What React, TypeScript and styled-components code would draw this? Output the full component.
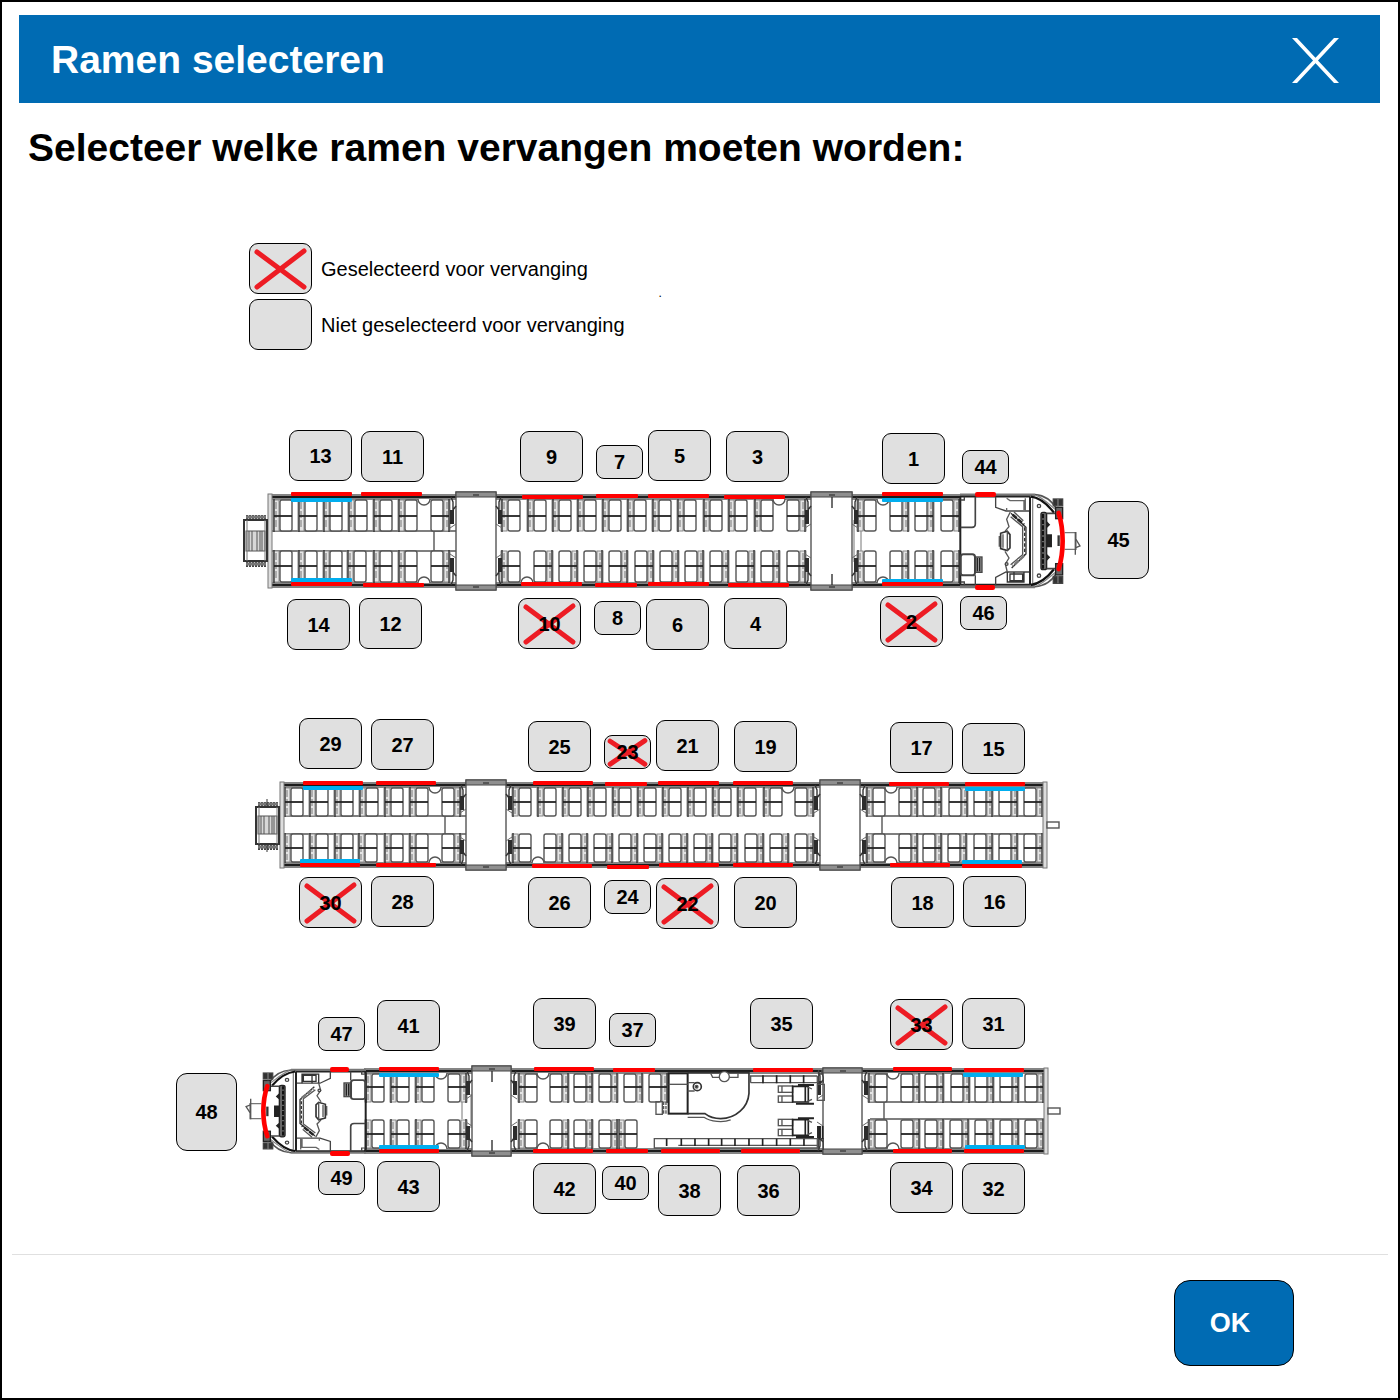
import React, { useState } from "react";
import styled, { createGlobalStyle } from "styled-components";

const GlobalStyle = createGlobalStyle`
  *, *::before, *::after { box-sizing: border-box; }
  body {
    margin: 0;
    background: #fff;
    color: #000;
    font-family: "Liberation Sans", Arial, sans-serif;
  }
`;

const BLUE = "#006bb3";

const Dialog = styled.main`
  display: flex;
  flex-direction: column;
  min-height: 100vh;
  border: 2px solid #000;
  background: #fff;
`;

const TitleBar = styled.header`
  display: flex;
  align-items: center;
  justify-content: space-between;
  height: 88px;
  margin: 13px 18px 0 17px;
  padding: 2px 40px 0 32px;
  background: ${BLUE};
  color: #fff;
`;

const Title = styled.h1`
  margin: 0;
  font-size: 39px;
  line-height: 46px;
  font-weight: bold;
`;

const CloseButton = styled.button`
  display: flex;
  padding: 0;
  border: 0;
  background: none;
  color: #fff;
  cursor: pointer;
`;

const Prompt = styled.h2`
  margin: 22px 26px 0;
  font-size: 39px;
  line-height: 46px;
  font-weight: bold;
`;

const Board = styled.div`
  display: flex;
  flex-direction: column;
  width: 1060px;
  margin: 72px auto 0;
`;

const Legend = styled.div`
  display: flex;
  align-items: center;
  gap: 34px;
  padding-left: 79px;
  margin-bottom: 70px;
`;

const LegendList = styled.ul`
  display: grid;
  gap: 5px;
  margin: 0;
  padding: 0;
  list-style: none;
`;

const LegendItem = styled.li`
  display: flex;
  align-items: center;
  gap: 9px;
  font-size: 20px;
  line-height: 24px;
`;

const Stray = styled.span`
  padding-bottom: 8px;
  font-size: 12px;
  line-height: 12px;
`;

const Swatch = styled.span`
  display: block;
  width: 63px;
  height: 51px;
  border: 1px solid #000;
  border-radius: 9px;
  background: #e0e0e0;
`;

const Coaches = styled.div`
  display: grid;
  gap: 48px;
`;

const CoachCanvas = styled.section`
  position: relative;
  height: 240px;
`;

const Drawing = styled.svg`
  display: block;
  width: 1060px;
  height: 240px;
`;

type PinSize = "normal" | "small" | "front";

const pinSizes: Record<PinSize, { width: number; height: number; radius: number }> = {
  normal: { width: 63, height: 51, radius: 9 },
  small: { width: 47, height: 34, radius: 8 },
  front: { width: 61, height: 78, radius: 11 },
};

const Pin = styled.button<{ $size: PinSize; $x: number; $y: number }>`
  position: absolute;
  left: ${(p) => p.$x}px;
  top: ${(p) => p.$y}px;
  display: grid;
  place-items: center;
  width: ${(p) => pinSizes[p.$size].width}px;
  height: ${(p) => pinSizes[p.$size].height}px;
  padding: 0;
  border: 1px solid #000;
  border-radius: ${(p) => pinSizes[p.$size].radius}px;
  background: #e0e0e0;
  color: #000;
  font: bold 20px/24px "Liberation Sans", Arial, sans-serif;
  cursor: pointer;

  & > * { grid-area: 1 / 1; }
`;

const PinNumber = styled.span`
  position: relative;
`;

const CrossSvg = styled.svg`
  display: block;
  width: 100%;
  height: 100%;
`;

const Divider = styled.hr`
  width: calc(100% - 20px);
  height: 1px;
  margin: 18px 10px 0;
  border: 0;
  background: #e0e0e0;
`;

const Footer = styled.footer`
  display: flex;
  justify-content: flex-end;
  padding: 25px 104px 32px;
`;

const OkButton = styled.button`
  width: 120px;
  height: 86px;
  padding: 0 8px 0 0;
  border: 1px solid #000;
  border-radius: 16px;
  background: ${BLUE};
  color: #fff;
  font: bold 27px/32px "Liberation Sans", Arial, sans-serif;
  cursor: pointer;
`;

function Cross() {
  return (
    <CrossSvg viewBox="0 0 61 49" preserveAspectRatio="none" aria-hidden="true">
      <path
        d="M7 8L54 43M54 7L7 43"
        fill="none"
        stroke="#ed1c24"
        strokeWidth="5"
        strokeLinecap="round"
        vectorEffect="non-scaling-stroke"
      />
    </CrossSvg>
  );
}

/* ---------- train plan ---------- */

/* The three coaches share one plan; each one shows the part that starts at its own top. */
const PLAN_LEFT = 170;

type Window = [number: number, x: number, y: number, size?: PinSize];
type Bar = [from: number, to: number, y: number];

interface Levels {
  wallTop: number;
  seatTop: number;
  midTop: number;
  aisleTop: number;
  aisleBottom: number;
  midBottom: number;
  seatBottom: number;
  wallBottom: number;
}

interface SeatRows {
  left: number[];
  right: number[];
}

function Seat({ x, top, bottom, mid, flip }: { x: number; top: number; bottom: number; mid: number; flip?: boolean }) {
  const h = bottom - top;
  const back = flip ? x + 13 : x;
  const cushion = flip ? x : x + 7;
  return (
    <g strokeWidth="1.4">
      <rect x={back} y={top} width="6" height={h} fill="#e4e4e4" stroke="#8a8a8a" strokeWidth="1" />
      <path d={`M${flip ? back + 5 : back + 1} ${top - 1}V${bottom + 1}`} stroke="#333" />
      <path d={`M${back + 3} ${top + 2}V${bottom - 2}`} stroke="#777" strokeDasharray="7 2" strokeWidth="1" />
      <rect x={cushion} y={top} width="12" height={h} rx="2" fill="#fff" stroke="#555" />
      <path d={`M${flip ? x : x + 1} ${mid}h18`} stroke="#222" strokeWidth="1.8" />
    </g>
  );
}

function Seats({ rows, top, bottom, mid }: { rows: SeatRows; top: number; bottom: number; mid: number }) {
  return (
    <g>
      {rows.left.map((x) => (
        <Seat key={`l${x}`} x={x} top={top} bottom={bottom} mid={mid} />
      ))}
      {rows.right.map((x) => (
        <Seat key={`r${x}`} x={x} top={top} bottom={bottom} mid={mid} flip />
      ))}
    </g>
  );
}

function Walls({ from, to, lv }: { from: number; to: number; lv: Levels }) {
  const w = to - from;
  return (
    <g>
      <rect x={from} y={lv.wallTop} width={w} height="6" fill="#858585" />
      <path d={`M${from} ${lv.wallTop + 3}H${to}`} stroke="#1c1c1c" strokeWidth="2" />
      <rect x={from} y={lv.wallBottom - 6} width={w} height="6" fill="#858585" />
      <path d={`M${from} ${lv.wallBottom - 3}H${to}`} stroke="#1c1c1c" strokeWidth="2" />
    </g>
  );
}

/* Door section between two seat areas. */
function Vestibule({ from, to, lv, ticks, flush }: { from: number; to: number; lv: Levels; ticks?: boolean; flush?: boolean }) {
  const out = flush ? 0 : 2;
  const t = lv.wallTop - out;
  const b = lv.wallBottom + out;
  const mid = Math.round((from + to) / 2);
  const posts = [
    { x: from - 6, edge: from, dir: 1 },
    { x: to + 2, edge: to, dir: -1 },
  ];
  return (
    <g>
      <rect x={from} y={t} width={to - from} height={b - t} fill="#fff" stroke="#555" strokeWidth="1.4" />
      <rect x={from} y={t} width={to - from} height="5" fill="#8f8f8f" stroke="#444" />
      <rect x={from} y={b - 5} width={to - from} height="5" fill="#8f8f8f" stroke="#444" />
      <path d={`M${mid - 3} ${t + 3}h6M${mid - 3} ${b - 3}h6`} stroke="#444" strokeWidth="1.4" />
      {ticks && <path d={`M${mid} ${t + 5}v11M${mid} ${b - 5}v-11`} stroke="#333" strokeWidth="1.4" />}
      {posts.map((p) => (
        <g key={p.x} fill="none">
          <path
            d={`M${p.edge} ${lv.seatTop + 6}l${-3 * p.dir} 4v-8l${-2 * p.dir} -5M${p.edge} ${lv.seatBottom - 6}l${-3 * p.dir} -4v8l${-2 * p.dir} 5`}
            stroke="#333"
            strokeWidth="1.4"
          />
          <path d={`M${p.edge} ${lv.aisleTop - 7}l${-6 * p.dir} 4M${p.edge} ${lv.aisleBottom + 7}l${-6 * p.dir} -4`} stroke="#666" />
          <rect x={p.x} y={lv.midTop - 6} width="4" height="14" fill="#2c2c2c" />
          <rect x={p.x} y={lv.midBottom - 8} width="4" height="14" fill="#2c2c2c" />
        </g>
      ))}
    </g>
  );
}

function Tables({ top, bottom, lv }: { top: number[]; bottom: number[]; lv: Levels }) {
  return (
    <g fill="#fff" stroke="#555" strokeWidth="1.4">
      {top.map((x) => (
        <path key={`t${x}`} d={`M${x - 6} ${lv.seatTop - 1}a6 6 0 0 0 12 0`} />
      ))}
      {bottom.map((x) => (
        <path key={`b${x}`} d={`M${x - 6} ${lv.seatBottom + 1}a6 6 0 0 1 12 0`} />
      ))}
    </g>
  );
}

function Aisle({ from, to, step, lv }: { from: number; to: number; step: number; lv: Levels }) {
  return (
    <path
      d={`M${from} ${lv.aisleTop}H${to}M${from} ${lv.aisleBottom}H${to}M${step} ${lv.aisleTop}V${lv.aisleBottom}`}
      fill="none"
      stroke="#555"
      strokeWidth="1.4"
    />
  );
}

/* Bellows that couples this coach to its neighbour. */
function Bellows({ x, top, bottom, lv }: { x: number; top: number; bottom: number; lv: Levels }) {
  const ribs = [3, 6, 9, 12, 15, 18, 21];
  return (
    <g fill="none" stroke="#333">
      <path d={ribs.map((r) => `M${x + r} ${top - 5}V${top}M${x + r} ${bottom}v6`).join("")} strokeWidth="2" stroke="#444" />
      <path d={`M${x + 2} ${top - 3}h20M${x + 2} ${bottom + 3}h20`} strokeWidth="3" stroke="#777" />
      <rect x={x} y={top} width="23" height={bottom - top} fill="#fff" strokeWidth="2" />
      <rect x={x + 2} y={lv.aisleTop} width="19" height={lv.aisleBottom - lv.aisleTop} fill="#d8d8d8" stroke="#555" />
      <path d={`M${x + 3} ${top}V${bottom}M${x + 21} ${top}V${bottom}`} stroke="#777" />
      <path d={[5, 8, 13, 16, 18].map((r) => `M${x + r} ${lv.aisleTop}V${lv.aisleBottom}`).join("")} stroke="#555" />
    </g>
  );
}

function EndWall({ x, lv }: { x: number; lv: Levels }) {
  return <rect x={x} y={lv.wallTop} width="4" height={lv.wallBottom - lv.wallTop} fill="#ddd" stroke="#777" />;
}

function Coupler({ x, y }: { x: number; y: number }) {
  return <rect x={x} y={y} width="12" height="6" fill="#fff" stroke="#555" strokeWidth="1.4" />;
}

/* Driver's cab, drawn three times as large and scaled down by its caller. */
function Cab({ transform }: { transform: string }) {
  return (
    <g transform={transform} fill="none" stroke="#444" strokeWidth="4">
      <path d="M510 225H735M510 500H735" stroke="#777" strokeWidth="9" />
      <path d="M510 230H720M510 494H720" stroke="#222" strokeWidth="5" />
      <path d="M511 230V495" stroke="#222" strokeWidth="6" />
      <path d="M512 240H523V230M512 486H523V496" />
      <path d="M556 230V312Q556 322 546 322H512" strokeWidth="5" />
      <rect x="512" y="403" width="43" height="63" rx="8" strokeWidth="6" />
      <rect x="556" y="411" width="20" height="46" fill="#999" />
      <path d="M562 414V454M569 414V454" stroke="#222" />
      <path d="M556 466V495M617 230V262L648 273H720M617 496V472L648 456H720" />
      <path d="M650 235L660 242H702V270M650 273V264M706 235V273" stroke="#666" />
      <path d="M652 456V486H702V456M660 462H698V482H660ZM672 456V486" stroke="#333" />
      <path d="M661 276L650 298L657 320L645 334M645 394L657 414L646 432L652 456" stroke="#555" />
      <circle cx="650" cy="432" r="4" />
      <path d="M632 340L652 334L660 344V384L652 392L632 386Z" stroke="#333" strokeWidth="5" />
      <path d="M639 343V383M628 348V380M652 334V392" stroke="#555" />
      <path d="M663 280L708 322V402L665 444" stroke="#333" />
      <path d="M672 276L700 302M662 290L698 320V404L662 434" stroke="#555" />
      <path d="M668 284L702 314" stroke="#222" strokeWidth="8" strokeDasharray="16 5" />
      <path d="M702 408L668 438" stroke="#777" strokeWidth="7" strokeDasharray="16 5" />
      <path d="M704 322V404" stroke="#333" strokeDasharray="10 6" />
      <path d="M720 230V495" stroke="#222" strokeWidth="6" />
      <path d="M728 235V490" stroke="#888" />
      <circle cx="747" cy="258" r="5" />
      <circle cx="747" cy="467" r="5" />
      <path d="M735 224C762 226 786 242 800 268M735 500C762 498 786 484 800 458" stroke="#555" strokeWidth="5" />
      <path d="M722 230C748 232 770 250 792 278M722 495C748 492 770 476 792 448" stroke="#111" strokeWidth="7" />
      <path d="M740 226C766 240 780 256 806 276M740 498C766 486 780 468 806 450" stroke="#888" />
      <rect x="753" y="277" width="17" height="172" rx="6" fill="#666" stroke="#222" />
      <path d="M759 282V446" stroke="#111" strokeWidth="6" strokeDasharray="13 4" />
      <path d="M770 280H798M770 446H798" strokeWidth="5" />
      <path d="M770 345H784V380H770ZM770 306L778 314L770 322M770 404L778 412L770 420" fill="#222" stroke="#222" />
      <path d="M806 346V378" stroke="#333" strokeWidth="7" />
      <rect x="790" y="237" width="28" height="20" fill="#333" stroke="#444" />
      <rect x="790" y="470" width="28" height="20" fill="#333" stroke="#444" />
      <rect x="797" y="262" width="21" height="34" fill="#666" stroke="#222" />
      <rect x="797" y="431" width="21" height="34" fill="#666" stroke="#222" />
      <path d="M804 237V490" stroke="#777" strokeDasharray="24 205" />
      <path d="M824 338H858V388H824" fill="#fff" stroke="#777" />
      <path d="M856 336V404M858 358L870 378L856 384" stroke="#555" />
      <path d="M806 279C822 330 822 396 806 447" stroke="#f00" strokeWidth="14" strokeLinecap="round" />
    </g>
  );
}

function Wheelchair({ y }: { y: number }) {
  return (
    <g transform={`translate(0 ${y})`}>
      <rect x="955" y="3" width="43" height="19" />
      <rect x="955" y="33" width="43" height="19" />
      <path d="M966 3V22M966 33V52" />
      <path d="M998 4H1045V51H998ZM1036 4V51" stroke="#222" strokeWidth="5" />
      <path d="M1014 0H1062M1008 56H1062" stroke="#222" strokeWidth="6" />
      <path d="M1043 6L1056 12M1043 49L1056 43" />
    </g>
  );
}

/* Toilet, folding benches and wheelchair places, drawn three times as large. */
function Facilities() {
  const topBench = [909, 950, 991, 1031];
  const bottomBench = [620, 664, 705, 746, 785, 825, 867, 908, 950, 991, 1032];
  return (
    <g transform="translate(460 990) scale(0.3333)" fill="none" stroke="#555" strokeWidth="4">
      <rect x="626" y="250" width="57" height="121" stroke="#222" strokeWidth="6" />
      <path d="M626 283H683" />
      <rect x="588" y="335" width="19" height="38" />
      <path d="M611 335V373M618 335V373" strokeDasharray="10 3" />
      <path d="M683 248H867V310C864 352 828 386 782 386C758 386 744 378 735 371H683" stroke="#333" strokeWidth="5" />
      <path d="M683 382H732C752 396 790 398 812 390" />
      <path d="M752 250L758 262H834V250" />
      <circle cx="793" cy="260" r="15" fill="#fff" />
      <circle cx="712" cy="290" r="12" stroke="#333" strokeWidth="5" />
      <circle cx="710" cy="290" r="4" fill="#222" />
      <path d="M683 278H704M683 303H704" />
      <path d="M868 258H1072M872 278H1072V258M872 258V278" />
      <path d={topBench.map((x) => `M${x} 256V280`).join("")} stroke="#222" strokeWidth="5" />
      <path d="M583 446H1072V474H583Z" />
      <path d="M655 466H1072" />
      <path d={bottomBench.map((x) => `M${x} 446V468`).join("")} stroke="#222" strokeWidth="5" />
      <Wheelchair y={285} />
      <Wheelchair y={385} />
      <rect x="1072" y="283" width="21" height="48" />
      <path d="M1076 240V280M1084 240L1090 262V280M1076 252H1090M1076 480V446H1090V480" stroke="#444" />
      <path d="M1078 408V446M1088 408V446" stroke="#222" strokeWidth="5" />
    </g>
  );
}

function Bars({ bars, color, round }: { bars: Bar[]; color: string; round?: boolean }) {
  return (
    <g fill={color}>
      {bars.map(([from, to, y]) => (
        <rect key={`${from}-${y}`} x={from} y={y} width={to - from} height={round ? 5 : 4} rx={round ? 2 : 1} />
      ))}
    </g>
  );
}

const LIGHT_BLUE = "#00aeef";
const RED = "#f00";

const lv1: Levels = {
  wallTop: 494, seatTop: 500, midTop: 516, aisleTop: 531,
  aisleBottom: 551, midBottom: 566, seatBottom: 582, wallBottom: 588,
};
const lv2: Levels = {
  wallTop: 782, seatTop: 788, midTop: 802, aisleTop: 816,
  aisleBottom: 834, midBottom: 848, seatBottom: 862, wallBottom: 868,
};
const lv3: Levels = {
  wallTop: 1068, seatTop: 1074, midTop: 1087, aisleTop: 1102,
  aisleBottom: 1119, midBottom: 1134, seatBottom: 1148, wallBottom: 1154,
};

function CoachOne() {
  return (
    <g>
      <Walls from={270} to={960} lv={lv1} />
      <Aisle from={272} to={456} step={434} lv={lv1} />
      <path d="M861 531V551M854 520V562" stroke="#777" />
      <Seats
        rows={{
          left: [273, 298, 323, 348, 373, 398, 501, 527, 552, 577, 602, 627, 652, 677, 703, 728, 754, 857],
          right: [431, 787, 890, 915, 941],
        }}
        top={500} bottom={531} mid={516}
      />
      <Seats
        rows={{
          left: [273, 298, 323, 347, 373, 398, 501, 857],
          right: [431, 534, 559, 584, 609, 635, 660, 685, 710, 736, 761, 787, 890, 915, 941],
        }}
        top={551} bottom={582} mid={566}
      />
      <Tables top={[424, 779, 883]} bottom={[424, 527, 883]} lv={lv1} />
      <EndWall x={268} lv={lv1} />
      <Bellows x={244} top={520} bottom={561} lv={lv1} />
      <Vestibule from={456} to={496} lv={lv1} />
      <Vestibule from={811} to={852} lv={lv1} ticks />
      <Cab transform="translate(790 420) scale(0.3333)" />
      <Bars color={LIGHT_BLUE} bars={[[291, 352, 498], [291, 352, 578], [882, 943, 498], [882, 943, 579]]} />
      <Bars
        color={RED}
        bars={[
          [291, 352, 492], [361, 422, 492], [522, 583, 495], [596, 638, 494], [648, 709, 494], [724, 785, 495],
          [882, 943, 492], [291, 352, 582], [363, 424, 583], [521, 582, 582], [595, 637, 583], [648, 709, 582],
          [728, 789, 583], [882, 943, 582],
        ]}
      />
      <Bars color={RED} round bars={[[975, 996, 492], [975, 995, 585]]} />
    </g>
  );
}

function CoachTwo() {
  return (
    <g>
      <Walls from={282} to={1046} lv={lv2} />
      <Aisle from={283} to={466} step={445} lv={lv2} />
      <Aisle from={868} to={1046} step={882} lv={lv2} />
      <Seats
        rows={{
          left: [284, 309, 334, 359, 384, 409, 512, 537, 562, 587, 612, 637, 662, 687, 712, 737, 763, 866],
          right: [442, 795, 899, 923, 949, 974, 999, 1024],
        }}
        top={788} bottom={816} mid={802}
      />
      <Seats
        rows={{
          left: [284, 309, 334, 358, 384, 409, 512, 866],
          right: [442, 544, 569, 594, 619, 644, 669, 694, 719, 745, 770, 795, 899, 923, 948, 974, 999, 1024],
        }}
        top={834} bottom={862} mid={848}
      />
      <Tables top={[435, 788, 891]} bottom={[435, 538, 891]} lv={lv2} />
      <EndWall x={280} lv={lv2} />
      <EndWall x={1043} lv={lv2} />
      <Coupler x={1047} y={822} />
      <Bellows x={256} top={807} bottom={844} lv={lv2} />
      <path d="M267 799V806M267 844V852" stroke="#333" />
      <Vestibule from={466} to={506} lv={lv2} />
      <Vestibule from={820} to={860} lv={lv2} />
      <Bars color={LIGHT_BLUE} bars={[[303, 363, 786], [300, 360, 859], [965, 1025, 787], [962, 1022, 860]]} />
      <Bars
        color={RED}
        bars={[
          [303, 363, 781], [376, 436, 781], [533, 593, 781], [605, 647, 782], [658, 719, 781], [733, 793, 781],
          [889, 949, 782], [965, 1025, 782], [300, 360, 863], [376, 436, 863], [532, 592, 864], [607, 649, 865],
          [659, 719, 863], [733, 793, 863], [890, 950, 863], [962, 1022, 864],
        ]}
      />
    </g>
  );
}

function CoachThree() {
  return (
    <g>
      <Walls from={364} to={1048} lv={lv3} />
      <Aisle from={870} to={1047} step={884} lv={lv3} />
      <path d="M462 1102V1119M471 1094V1128" stroke="#777" />
      <Seats
        rows={{
          left: [365, 390, 415, 518, 868],
          right: [448, 550, 574, 599, 624, 649, 901, 925, 951, 975, 1000, 1025],
        }}
        top={1074} bottom={1102} mid={1087}
      />
      <Seats
        rows={{
          left: [365, 390, 415, 518, 618, 868],
          right: [448, 550, 574, 599, 901, 925, 950, 975, 1000, 1025],
        }}
        top={1120} bottom={1148} mid={1134}
      />
      <Tables top={[441, 543, 893]} bottom={[441, 543, 893]} lv={lv3} />
      <EndWall x={1044} lv={lv3} />
      <Coupler x={1048} y={1108} />
      <Vestibule from={472} to={511} lv={lv3} ticks />
      <Vestibule from={823} to={862} lv={lv3} flush />
      <Facilities />
      <Cab transform="matrix(-0.3333 0 0 -0.3 536 1220)" />
      <Bars color={LIGHT_BLUE} bars={[[379, 439, 1073], [379, 439, 1145], [963, 1023, 1073], [965, 1025, 1145]]} />
      <Bars
        color={RED}
        bars={[
          [379, 439, 1067], [534, 594, 1067], [613, 655, 1068], [753, 813, 1068], [893, 952, 1067], [964, 1024, 1068],
          [379, 439, 1149], [533, 593, 1149], [606, 648, 1149], [661, 720, 1149], [741, 800, 1149], [893, 952, 1149],
          [964, 1024, 1149],
        ]}
      />
      <Bars color={RED} round bars={[[330, 349, 1067], [330, 350, 1151]]} />
    </g>
  );
}

interface Coach {
  name: string;
  top: number;
  drawing: React.ReactNode;
  windows: Window[];
}

const coaches: Coach[] = [
  {
    name: "Rijtuig 1",
    top: 420,
    drawing: <CoachOne />,
    windows: [
      [13, 289, 430], [11, 361, 431], [9, 520, 431], [7, 596, 445, "small"], [5, 648, 430], [3, 726, 431],
      [1, 882, 433], [44, 962, 450, "small"], [45, 1088, 501, "front"], [14, 287, 599], [12, 359, 598],
      [10, 518, 598], [8, 594, 601, "small"], [6, 646, 599], [4, 724, 598], [2, 880, 596], [46, 960, 596, "small"],
    ],
  },
  {
    name: "Rijtuig 2",
    top: 708,
    drawing: <CoachTwo />,
    windows: [
      [29, 299, 718], [27, 371, 719], [25, 528, 721], [23, 604, 735, "small"], [21, 656, 720], [19, 734, 721],
      [17, 890, 722], [15, 962, 723], [30, 299, 877], [28, 371, 876], [26, 528, 877], [24, 604, 880, "small"],
      [22, 656, 878], [20, 734, 877], [18, 891, 877], [16, 963, 876],
    ],
  },
  {
    name: "Rijtuig 3",
    top: 996,
    drawing: <CoachThree />,
    windows: [
      [48, 176, 1073, "front"], [47, 318, 1017, "small"], [41, 377, 1000], [39, 533, 998], [37, 609, 1013, "small"],
      [35, 750, 998], [33, 890, 999], [31, 962, 998], [49, 318, 1161, "small"], [43, 377, 1161], [42, 533, 1163],
      [40, 602, 1166, "small"], [38, 658, 1165], [36, 737, 1165], [34, 890, 1162], [32, 962, 1163],
    ],
  },
];

export default function App() {
  const [selected, setSelected] = useState<number[]>([2, 10, 22, 23, 30, 33]);

  const toggle = (n: number) =>
    setSelected((now) => (now.includes(n) ? now.filter((v) => v !== n) : [...now, n]));

  return (
    <>
      <GlobalStyle />
      <Dialog>
        <TitleBar>
          <Title>Ramen selecteren</Title>
          <CloseButton type="button" aria-label="Sluiten">
            <svg width="49" height="45" viewBox="0 0 49 45" aria-hidden="true">
              <path d="M1 0H6L48 45H43ZM43 0H48L6 45H1Z" fill="currentColor" />
            </svg>
          </CloseButton>
        </TitleBar>
        <Prompt>Selecteer welke ramen vervangen moeten worden:</Prompt>
        <Board>
          <Legend>
            <LegendList>
              <LegendItem>
                <Swatch><Cross /></Swatch>
                Geselecteerd voor vervanging
              </LegendItem>
              <LegendItem>
                <Swatch />
                Niet geselecteerd voor vervanging
              </LegendItem>
            </LegendList>
            <Stray>.</Stray>
          </Legend>
          <Coaches>
            {coaches.map((coach) => (
              <CoachCanvas key={coach.name} aria-label={coach.name}>
                <Drawing viewBox={`${PLAN_LEFT} ${coach.top} 1060 240`} aria-hidden="true">
                  {coach.drawing}
                </Drawing>
                {coach.windows.map(([n, x, y, size = "normal"]) => (
                  <Pin
                    key={n}
                    type="button"
                    $size={size}
                    $x={x - PLAN_LEFT}
                    $y={y - coach.top}
                    aria-pressed={selected.includes(n)}
                    onClick={() => toggle(n)}
                  >
                    {selected.includes(n) && <Cross />}
                    <PinNumber>{n}</PinNumber>
                  </Pin>
                ))}
              </CoachCanvas>
            ))}
          </Coaches>
        </Board>
        <Divider />
        <Footer>
          <OkButton type="button">OK</OkButton>
        </Footer>
      </Dialog>
    </>
  );
}
